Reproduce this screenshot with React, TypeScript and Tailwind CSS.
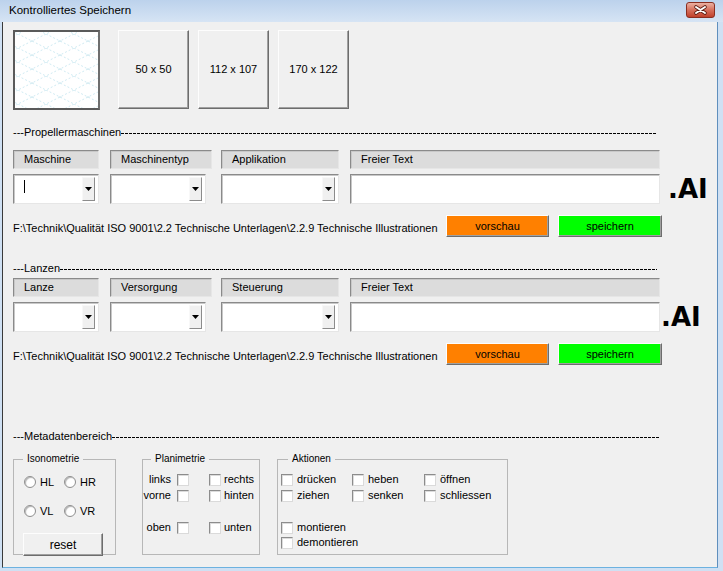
import React from "react";

const PATH = "F:\\Technik\\Qualität ISO 9001\\2.2 Technische Unterlagen\\2.2.9 Technische Illustrationen";

const raised =
  "border border-t-[#fdfdfd] border-l-[#fdfdfd] border-r-[#6d6d6d] border-b-[#6d6d6d] shadow-[inset_-1px_-1px_0_#a0a0a0]";
const sunken =
  "border border-t-[#8a8a8a] border-l-[#8a8a8a] border-r-[#e6e6e6] border-b-[#e6e6e6] shadow-[inset_1px_1px_0_#c8c8c8]";

const Arrow = () => (
  <svg width="7" height="4" viewBox="0 0 7 4">
    <path d="M0 0h7L3.5 4z" fill="#000" />
  </svg>
);

const Combo = ({ w, cursor }: { w: string; cursor?: boolean }) => (
  <div className={`h-[30px] ${w} flex bg-white py-[2px] pr-[3px] ${sunken}`}>
    <div className="flex-1 relative">
      {cursor && <div className="absolute left-[10px] top-[3px] w-px h-[13px] bg-black" />}
    </div>
    <div className="w-[13px] bg-[#f0f0f0] border border-t-[#f8f8f8] border-l-[#f8f8f8] border-r-[#8c8c8c] border-b-[#8c8c8c] flex items-center justify-center">
      <Arrow />
    </div>
  </div>
);

const Header = ({ w, label }: { w: string; label: string }) => (
  <div className={`h-[19px] ${w} bg-[#dcdcdc] pl-[10px] flex items-center ${sunken}`}>{label}</div>
);

// "---Name" followed by a dashed rule up to the right end
const DashLabel = ({ text, w }: { text: string; w: string }) => (
  <div className={`${w} h-[13px] flex items-center`}>
    <span className="leading-[13px] whitespace-nowrap">---{text}</span>
    <div className="flex-1 h-px mt-[1px] bg-[repeating-linear-gradient(to_right,#000_0_3px,transparent_3px_4px)]" />
  </div>
);

const PathRow = () => (
  <div className="flex items-center h-[22px] mt-[11px]">
    <span className="w-[433px] mt-[4px] whitespace-nowrap">{PATH}</span>
    <button className={`w-[103px] h-[22px] bg-[#ff8000] ${raised}`}>vorschau</button>
    <button className={`w-[104px] h-[22px] ml-[9px] bg-[#00ff00] ${raised}`}>speichern</button>
  </div>
);

const Section = ({ labels, aiGap, cursor }: { labels: string[]; aiGap: string; cursor?: boolean }) => (
  <>
    <div className="flex">
      <Header w="w-[86px]" label={labels[0]} />
      <div className="ml-[11px]">
        <Header w="w-[102px]" label={labels[1]} />
      </div>
      <div className="ml-[9px]">
        <Header w="w-[118px]" label={labels[2]} />
      </div>
      <div className="ml-[11px]">
        <Header w="w-[310px]" label="Freier Text" />
      </div>
    </div>
    <div className="flex items-center mt-[5px]">
      <Combo w="w-[86px]" cursor={cursor} />
      <div className="ml-[11px]">
        <Combo w="w-[96px]" />
      </div>
      <div className="ml-[15px]">
        <Combo w="w-[118px]" />
      </div>
      <div className={`ml-[11px] w-[310px] h-[30px] bg-white ${sunken}`} />
      <span className={`${aiGap} font-['DejaVu_Sans',sans-serif] font-bold text-[26px] leading-[30px]`}>.AI</span>
    </div>
    <PathRow />
  </>
);

const Check = () => (
  <div className="w-[12px] h-[12px] shrink-0 bg-white border border-t-[#8c8c8c] border-l-[#8c8c8c] border-r-[#dadada] border-b-[#dadada] shadow-[inset_1px_1px_0_#dcdcdc]" />
);

const Radio = ({ label }: { label: string }) => (
  <div className="flex items-center w-[40px]">
    <div className="w-[12px] h-[12px] rounded-full bg-white border border-[#8e8e8e] shadow-[inset_1px_1px_1px_#b4b4b4]" />
    <span className="ml-[4px]">{label}</span>
  </div>
);

const Group = ({
  w,
  legend,
  legendLeft,
  children,
}: {
  w: string;
  legend: string;
  legendLeft: string;
  children: React.ReactNode;
}) => (
  <div className={`${w} h-[96px] border border-[#b7b7b7] relative`}>
    <span className={`absolute ${legendLeft} -top-[7px] px-[4px] bg-[#f0f0f0] text-[10px] leading-[12px]`}>{legend}</span>
    {children}
  </div>
);

const CheckLabel = ({ label }: { label: string }) => (
  <div className="flex items-center h-[13px]">
    <Check />
    <span className="ml-[4px]">{label}</span>
  </div>
);

const IsoPattern = () => (
  <svg width="83" height="76" viewBox="0 0 83 76">
    <defs>
      <pattern id="iso" width="28" height="14" patternUnits="userSpaceOnUse" x="3" y="2">
        <path d="M0 0L28 14M28 0L0 14" stroke="#cfeaf2" strokeWidth="1" strokeDasharray="2 2" fill="none" />
        <circle cx="14" cy="7" r="0.7" fill="#bfe0ea" />
      </pattern>
    </defs>
    <rect width="83" height="76" fill="#ffffff" />
    <rect width="83" height="76" fill="url(#iso)" />
  </svg>
);

export default function App() {
  return (
    <div className="w-[723px] h-[571px] flex flex-col bg-[#cfe0f3] font-['Liberation_Sans',Arial,sans-serif] text-[11px] text-black">
      {/* title bar */}
      <div className="h-[22px] flex items-center justify-between pl-[9px] pr-[8px] bg-linear-to-b from-[#bcd2ec] to-[#d6e4f4]">
        <span className="text-[11.5px]">Kontrolliertes Speichern</span>
        <div className="w-[29px] h-[16px] rounded-[3px] border border-[#8a2e20] bg-linear-to-b from-[#eab0a2] via-[#d66f5c] to-[#c0402b] self-start mt-[2px]">
          <svg width="27" height="14" viewBox="0 0 27 14">
            <path d="M9 4L18 10M18 4L9 10" stroke="#5a1b12" strokeWidth="3.6" strokeLinecap="round" />
            <path d="M9 4L18 10M18 4L9 10" stroke="#ffffff" strokeWidth="2" strokeLinecap="round" />
          </svg>
        </div>
      </div>

      <div className="flex-1 flex pl-[2px] pr-[5px] pb-[3px]">
        <div className="flex-1 flex flex-col bg-[#f0f0f0] border-l border-l-[#3a3a3a] border-r border-r-[#5f8fbd] border-b border-b-[#6cb2e0] pl-[10px] pt-[8px]">
          {/* thumbnails */}
          <div className="flex items-start">
            <div className="w-[87px] h-[80px] border-2 border-t-[#5a5a5a] border-l-[#5a5a5a] border-r-[#6e6e6e] border-b-[#5a5a5a] flex">
              <IsoPattern />
            </div>
            <div className="flex gap-[9px] ml-[18px]">
              {["50 x 50", "112 x 107", "170 x 122"].map((t) => (
                <div key={t} className={`w-[71px] h-[79px] flex items-center justify-center ${raised}`}>
                  {t}
                </div>
              ))}
            </div>
          </div>

          <div className="mt-[16px]">
            <DashLabel text="Propellermaschinen" w="w-[644px]" />
          </div>
          <div className="mt-[11px]">
            <Section labels={["Maschine", "Maschinentyp", "Applikation"]} aiGap="ml-[8px]" cursor />
          </div>

          <div className="mt-[25px]">
            <DashLabel text="Lanzen" w="w-[644px]" />
          </div>
          <div className="mt-[3px]">
            <Section labels={["Lanze", "Versorgung", "Steuerung"]} aiGap="ml-[1px]" />
          </div>

          <div className="mt-[65px]">
            <DashLabel text="Metadatenbereich" w="w-[647px]" />
          </div>

          {/* metadata groups */}
          <div className="flex mt-[16px]">
            <Group w="w-[103px]" legend="Isonometrie" legendLeft="left-[9px]">
              <div className="pl-[10px] pt-[14px] flex flex-col gap-[12px]">
                <div className="flex">
                  <Radio label="HL" />
                  <Radio label="HR" />
                </div>
                <div className="flex">
                  <Radio label="VL" />
                  <Radio label="VR" />
                </div>
              </div>
              <button className={`ml-[9px] mt-[14px] w-[80px] h-[23px] text-[12px] ${raised}`}>reset</button>
            </Group>

            <div className="ml-[26px]">
              <Group w="w-[118px]" legend="Planimetrie" legendLeft="left-[8px]">
                <div className="pt-[13px] flex flex-col">
                  {[
                    ["links", "rechts", ""],
                    ["vorne", "hinten", "mt-[3px]"],
                    ["oben", "unten", "mt-[19px]"],
                  ].map(([l, r, m]) => (
                    <div key={l} className={`flex items-center h-[13px] ${m}`}>
                      <span className="w-[28px] text-right">{l}</span>
                      <div className="ml-[6px]">
                        <Check />
                      </div>
                      <div className="ml-[20px]">
                        <Check />
                      </div>
                      <span className="ml-[3px]">{r}</span>
                    </div>
                  ))}
                </div>
              </Group>
            </div>

            <div className="ml-[17px]">
              <Group w="w-[231px]" legend="Aktionen" legendLeft="left-[10px]">
                <div className="pl-[3px] pt-[13px]">
                  <div className="grid grid-cols-[71px_72px_auto] gap-y-[3px]">
                    <CheckLabel label="drücken" />
                    <CheckLabel label="heben" />
                    <CheckLabel label="öffnen" />
                    <CheckLabel label="ziehen" />
                    <CheckLabel label="senken" />
                    <CheckLabel label="schliessen" />
                  </div>
                  <div className="mt-[19px] flex flex-col gap-[2px]">
                    <CheckLabel label="montieren" />
                    <CheckLabel label="demontieren" />
                  </div>
                </div>
              </Group>
            </div>
          </div>
        </div>
      </div>
    </div>
  );
}
